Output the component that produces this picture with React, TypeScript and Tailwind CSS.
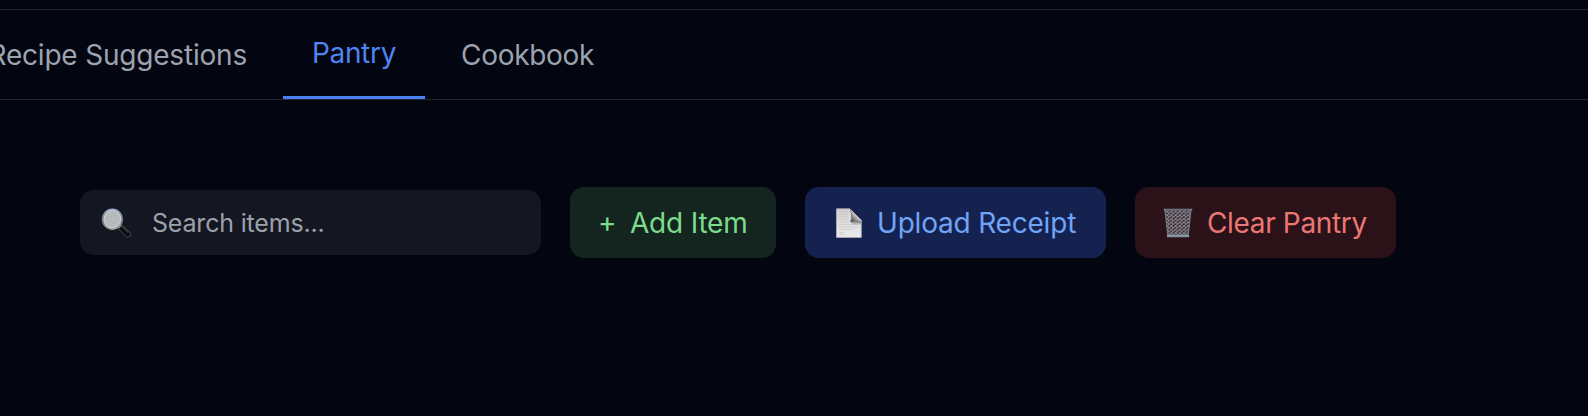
import React from "react";

function SearchIcon() {
  return (
    <svg width="30" height="30" viewBox="0 0 30 30" className="shrink-0" aria-hidden="true">
      <defs>
        <linearGradient id="rim" x1="0" y1="0" x2="0" y2="1">
          <stop offset="0" stopColor="#9cb0c8" />
          <stop offset="0.5" stopColor="#6f7780" />
          <stop offset="1" stopColor="#a19c97" />
        </linearGradient>
      </defs>
      <path d="M19.8 19.6 27 26.4" stroke="#4b4c4d" strokeWidth="6" strokeLinecap="round" />
      <path d="M20.6 20.4 26.8 26.3" stroke="#0b0c0e" strokeWidth="4.6" strokeLinecap="round" />
      <path d="M20.8 18.6 27.2 24.6" stroke="#50555a" strokeWidth="0.9" />
      <path d="M17 17 19.4 19.2" stroke="#858b90" strokeWidth="2.4" />
      <circle cx="11.4" cy="11.2" r="9.8" fill="#b8b9bc" stroke="url(#rim)" strokeWidth="1.8" />
      <circle cx="11.4" cy="11.2" r="8.4" fill="none" stroke="#d6d8d9" strokeWidth="0.8" />
    </svg>
  );
}

function DocumentIcon() {
  return (
    <svg width="26" height="30" viewBox="0 0 26 30" className="shrink-0" aria-hidden="true">
      <defs>
        <linearGradient id="paper" x1="0" y1="0" x2="0" y2="1">
          <stop offset="0" stopColor="#d0d0d0" />
          <stop offset="1" stopColor="#ececec" />
        </linearGradient>
        <linearGradient id="fold" x1="0.1" y1="0.9" x2="0.65" y2="0.3">
          <stop offset="0" stopColor="#3c3c3c" />
          <stop offset="0.5" stopColor="#9c9c9c" />
          <stop offset="1" stopColor="#f4f4f4" />
        </linearGradient>
        <linearGradient id="shade" x1="0" y1="0" x2="0" y2="1">
          <stop offset="0" stopColor="#444" stopOpacity="0.85" />
          <stop offset="1" stopColor="#999" stopOpacity="0" />
        </linearGradient>
      </defs>
      <path d="M0.5 0.8H14L25.3 12.5V29.4H0.5Z" fill="url(#paper)" stroke="#b3b3b3" strokeWidth="0.8" />
      <path d="M3 4H12M3 6.5H12M3 9H12M3 11.5H12M3 14H13M3 16.5H21M3 19H22M3 21.5H17M3 24.5H7M3 26.5H9" stroke="#c6c6c6" strokeWidth="0.7" />
      <path d="M14 12.5H25V18L16 16Z" fill="url(#shade)" />
      <path d="M13.2 0.8C16.2 3 16 7 14.8 14.2C18 12.4 22 12.2 25.4 13.6V12Z" fill="url(#fold)" />
      <path d="M14.3 1.8C16.2 5 15.7 9 15 13.6" fill="none" stroke="#777" strokeWidth="0.9" />
    </svg>
  );
}

function TrashIcon() {
  return (
    <svg width="30" height="30" viewBox="0 0 30 30" className="shrink-0" aria-hidden="true">
      <defs>
        <pattern id="mesh" width="4.2" height="3.6" patternUnits="userSpaceOnUse">
          <path d="M0 0 4.2 3.6M4.2 0 0 3.6" stroke="#898c95" strokeWidth="0.95" />
        </pattern>
      </defs>
      <path d="M2 2.5H28L25.3 28H4.7Z" fill="#38232a" />
      <path d="M2 2.5H28L25.3 28H4.7Z" fill="url(#mesh)" />
      <path d="M2 2 4.8 27.5M28 2 25.2 27.5" stroke="#71757d" strokeWidth="1.2" />
      <path d="M1.6 1.7H28.4" stroke="#7e8792" strokeWidth="2" strokeLinecap="round" />
      <path d="M2.5 2H27.5" stroke="#4b4f57" strokeWidth="0.8" />
      <path d="M5 28H25" stroke="#8493a6" strokeWidth="2.6" strokeLinecap="round" />
    </svg>
  );
}

export default function App() {
  return (
    <div className="h-[416px] w-full overflow-hidden bg-[#030510] font-['Inter',sans-serif] text-[28px] leading-[34px]">
      <nav className="pt-[9px]">
        <div className="flex h-[91px] items-stretch border-y border-[#232632] whitespace-nowrap text-[#9ca3af]">
          <button className="flex w-[276px] shrink-0 items-center justify-end pr-[29px]">
            <span className="tracking-[-0.2px]">Recipe Suggestions</span>
          </button>
          <button className="ml-[7px] flex w-[142px] shrink-0 items-center justify-center border-b-3 border-[#4a80f0] text-[#5084f2]">
            <span className="tracking-[-0.3px]">Pantry</span>
          </button>
          <button className="ml-[7px] flex shrink-0 items-center px-[29px]">
            <span className="tracking-[-0.3px]">Cookbook</span>
          </button>
        </div>
      </nav>
      <main className="flex items-center gap-[29px] pt-[87px] pl-[80px] whitespace-nowrap">
        <label className="flex h-[65px] w-[461px] items-center rounded-[14px] bg-[#141721] pl-[21px] text-[25px] text-[#9ca0ab]">
          <SearchIcon />
          <span className="ml-[21px] tracking-[-0.18px]">Search items...</span>
        </label>
        <button className="flex h-[71px] w-[206px] items-center rounded-[14px] bg-[#14251f] pl-[28px] text-[#7bdc8d]">
          <span className="w-[32px] pb-px text-left">+</span>
          <span className="tracking-[-0.2px]">Add Item</span>
        </button>
        <button className="flex h-[71px] w-[301px] items-center rounded-[14px] bg-[#15224f] pl-[31px] text-[#6fa4f7]">
          <DocumentIcon />
          <span className="ml-[15px] tracking-[-0.2px]">Upload Receipt</span>
        </button>
        <button className="flex h-[71px] w-[261px] items-center rounded-[14px] bg-[#2b1218] pl-[28px] text-[#ea7774]">
          <TrashIcon />
          <span className="ml-[14px] tracking-[-0.35px]">Clear Pantry</span>
        </button>
      </main>
    </div>
  );
}
